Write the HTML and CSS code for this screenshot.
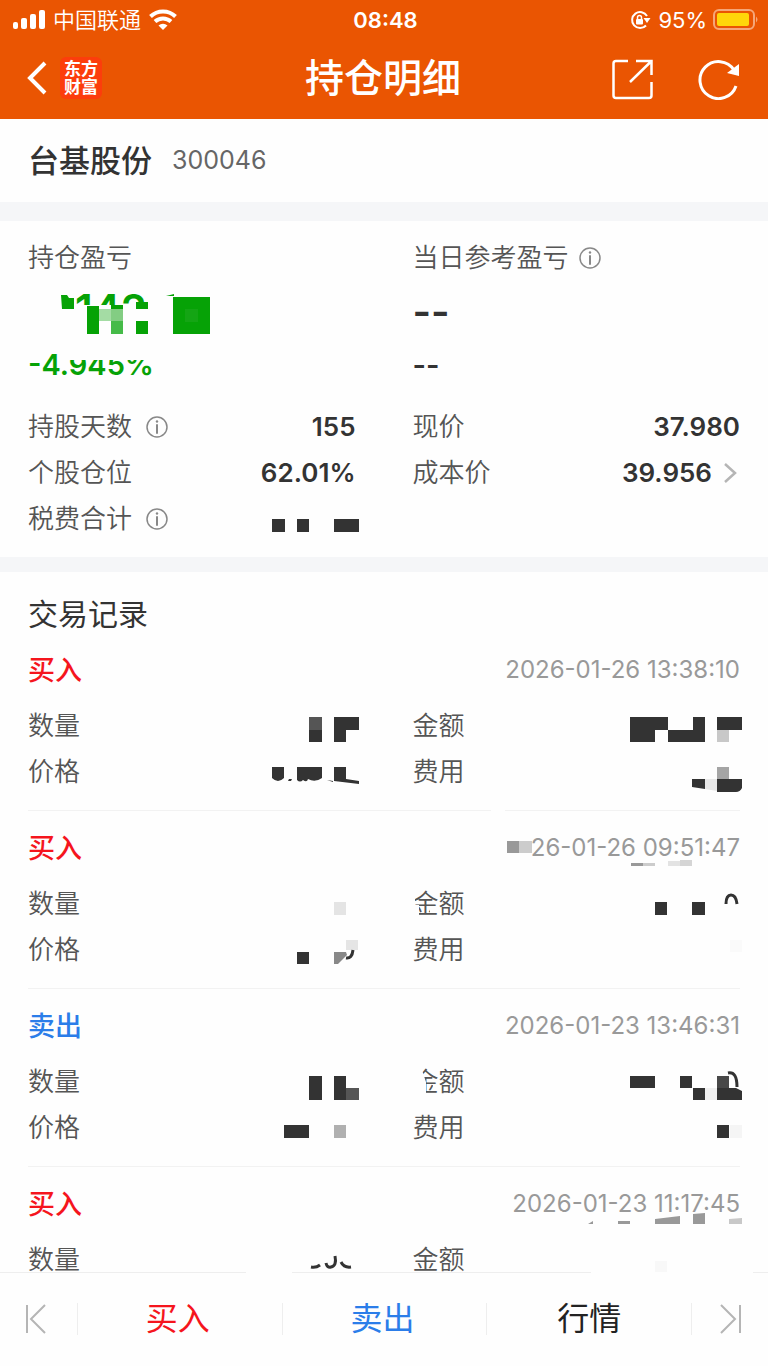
FILE: index.html
```html
<!DOCTYPE html>
<html lang="zh-CN">
<head>
<meta charset="utf-8">
<meta name="viewport" content="width=device-width, initial-scale=1">
<title>持仓明细</title>
<link rel="stylesheet" href="styles.css">
</head>
<body>
<div class="app">
  <header class="header">
    <div class="status">
      <div class="status-side">
        <svg width="34" height="22" viewBox="0 0 34 22" fill="#fff"><rect x="1" y="13" width="5" height="7" rx="2"/><rect x="9" y="9" width="6" height="11" rx="2"/><rect x="18" y="5" width="6" height="15" rx="2"/><rect x="27" y="1" width="6" height="19" rx="2"/></svg>
        <span class="carrier">中国联通</span>
        <svg width="30" height="22" viewBox="0 0 30 22"><g fill="none" stroke="#fff" stroke-width="4"><path d="M2.500 7.500a18 18 0 0 1 25 0"/><path d="M7 12.500a12 12 0 0 1 16 0"/></g><path d="M10.500 16.500a7 7 0 0 1 9 0L15 21z" fill="#fff"/></svg>
      </div>
      <time class="clock">08:48</time>
      <div class="status-side status-right">
        <svg width="22" height="20" viewBox="0 0 22 20"><path d="M17 6A8 8 0 1 0 16 15.500" fill="none" stroke="#fff" stroke-width="2"/><path d="M13.500 8h7l-3.500 5z" fill="#fff"/><rect x="6" y="9" width="7" height="5.500" rx="1" fill="#fff"/><path d="M7.500 9V7.500a2 2 0 0 1 4 0V9" fill="none" stroke="#fff" stroke-width="1.500"/></svg>
        <span class="battery-text">95%</span>
        <svg width="46" height="22" viewBox="0 0 46 22"><rect x="1" y="1" width="40" height="19" rx="5" fill="none" stroke="#f5a679" stroke-width="2"/><rect x="4" y="4" width="32" height="13" rx="2" fill="#ffd60a"/><path d="M43 7.500q3 3 0 6z" fill="#f5a679"/></svg>
      </div>
    </div>
    <div class="nav">
      <div class="nav-left">
        <button class="icon-btn" aria-label="返回"><svg width="22" height="34" viewBox="0 0 22 34" fill="none" stroke="#fff" stroke-width="4"><path d="M19 2 4 17l15 15"/></svg></button>
        <div class="logo"><span>东方</span><span>财富</span></div>
      </div>
      <h1 class="title">持仓明细</h1>
      <div class="nav-right">
        <button class="icon-btn" aria-label="分享"><svg width="42" height="42" viewBox="0 0 42 42" fill="none" stroke="#fff" stroke-width="2.500"><path d="M17 3H5q-2.500 0-2.500 2.500v32Q2.500 40 5 40h33q2.500 0 2.500-2.500V24M25 3h15.500v14M40 3.500 19 24"/></svg></button>
        <button class="icon-btn" aria-label="刷新"><svg width="42" height="42" viewBox="0 0 42 42"><path d="M36 12A18.500 18.500 0 1 0 38 28" fill="none" stroke="#fff" stroke-width="3"/><path d="M41 6v12l-12-3z" fill="#fff"/></svg></button>
      </div>
    </div>
  </header>

  <main class="content">
    <section class="stock">
      <h2 class="stock-name">台基股份</h2>
      <span class="stock-code">300046</span>
    </section>

    <section class="summary">
      <div class="pair pair-profit">
        <div>
          <div class="row"><span class="label">持仓盈亏</span></div>
          <div class="profit-big">
            <svg class="mosaic" width="184" height="62" viewBox="28 281 184 62" fill="#06a206">
              <clipPath id="top"><rect x="60" y="290" width="90" height="15"/></clipPath>
              <text x="75" y="325" class="profit-digits" clip-path="url(#top)">142</text>
              <path d="M61 295h6l2 3h5v11H62zM87 306h12v28H87zM136 302h12v7h-12zM136 321h12v13h-12zM173 297h37v37h-37zM166 296l8-2v2z"/>
              <path d="M99 309h12v12H99z" fill="#a4dca4"/><path d="M111 305h12v5h-12z"/><path d="M111 309h12v25h-12z" fill="#45bb48"/><path d="M111 309h12v12h-12z" fill="#83cd83"/><path d="M185 309h13v13h-13z" fill="#14a514"/>
            </svg>
          </div>
          <div class="profit-rate"><span>-4.945%</span><i class="veil"></i></div>
        </div>
        <div>
          <div class="row"><span class="label">当日参考盈亏</span><svg class="info near" viewBox="0 0 22 22"><use href="#info"/></svg></div>
          <div class="profit-big">--</div>
          <div class="profit-rate dark">--</div>
        </div>
      </div>
      <div class="pair">
        <div class="row"><span class="label">持股天数</span><svg class="info" viewBox="0 0 22 22"><use href="#info"/></svg><strong class="value">155</strong></div>
        <div class="row"><span class="label">现价</span><strong class="value">37.980</strong></div>
        <div class="row"><span class="label">个股仓位</span><strong class="value">62.01%</strong></div>
        <div class="row"><span class="label">成本价</span><strong class="value">39.956</strong><svg class="chevron" width="16" height="20" viewBox="0 0 16 20" fill="none" stroke="#b5b5b5" stroke-width="2.500"><path d="M3 1l10 9-10 9"/></svg></div>
        <div class="row"><span class="label">税费合计</span><svg class="info" viewBox="0 0 22 22"><use href="#info"/></svg>
          <svg class="mosaic value" width="90" height="46" viewBox="266 496 90 46" fill="#333"><path d="M272 519h13v13h-13zM297 519h12v13h-12zM334 519h25v13h-25z"/></svg></div>
      </div>
    </section>

    <section class="records">
      <h2 class="records-title">交易记录</h2>

      <article class="record record-split">
        <div class="record-head"><h3 class="buy">买入</h3><time>2026-01-26 13:38:10</time></div>
        <div class="pair">
          <div class="row"><span class="label">数量</span><svg class="mosaic value" width="90" height="46" viewBox="266 703 90 46" fill="#333"><path d="M309 730h13v12h-13zM334 717h25v13h-13v12h-12z"/><path d="M309 717h13v13h-13z" fill="#555"/></svg></div>
          <div class="row"><span class="label">金额</span><svg class="mosaic value" width="116" height="46" viewBox="624 703 116 46" fill="#333"><path d="M630 717h38v13h-13v12h-25zM668 730h25v-13h12v25h-37zM717 717h25v13h-25z"/><path d="M717 730h12v12h-12z" fill="#c8c8c8"/></svg></div>
          <div class="row"><span class="label">价格</span><svg class="mosaic value" width="90" height="46" viewBox="266 749 90 46" fill="#333"><path d="M272 767h12v11q-6 6-12 0zM288 781l1-2h3l-1 2zM297 767h25v11q-7 5-14 1-1 4-5 1-3 3-6 0zM327 780l6 1v1zM334 767h12v12l13 2v3l-25-3z"/></svg></div>
          <div class="row"><span class="label">费用</span><svg class="mosaic value" width="116" height="46" viewBox="624 749 116 46" fill="#333"><path d="M692 779h13v10l-13-2zM717 779h25v9q-2 4-6 4h-19z"/><path d="M717 767h12v12h-12z" fill="#a5a5a5"/><path d="M705 779h12v12l-12-2z" fill="#e8e8e8"/></svg></div>
        </div>
      </article>

      <article class="record">
        <div class="record-head"><h3 class="buy">买入</h3><time>2026-01-26 09:51:47</time>
          <svg class="mosaic cover" width="240" height="46" viewBox="500 825 240 46"><path d="M498 832h32l2 8v20h-34z" fill="#fefefe"/><path d="M507 841h12v12h-12z" fill="#999"/><path d="M519 841h13v12h-13z" fill="#ccc"/><path d="M631 863h12v3h-12z" fill="#999"/><path d="M643 863h12v3h-12z" fill="#ccc"/><path d="M668 861h12v5h-12z" fill="#e3e3e3"/><path d="M680 860h12v6h-12z" fill="#d5d5d5"/></svg></div>
        <div class="pair">
          <div class="row"><span class="label">数量</span><svg class="mosaic value" width="90" height="46" viewBox="266 881 90 46"><path d="M334 902h12v13h-12z" fill="#e4e4e4"/></svg></div>
          <div class="row"><span class="label">金额<svg class="label-cover" width="26" height="46" viewBox="0 0 26 46" fill="#fefefe"><path d="M0 8h2v30H0zM2 24h4v14H2zM17 25h8v7h-8z"/></svg></span><svg class="mosaic value" width="116" height="46" viewBox="624 881 116 46" fill="#333"><path d="M655 902h12v13h-12zM692 902h13v13h-13z"/><path d="M726 904q0-9 5-9t6 9" fill="none" stroke="#333" stroke-width="3"/></svg></div>
          <div class="row"><span class="label">价格</span><svg class="mosaic value" width="90" height="46" viewBox="266 927 90 46" fill="#333"><path d="M297 952h12v12h-12z"/><path d="M334 952h12l1 3-9 9h-4z" fill="#888"/><path d="M346 940h12v10h-12z" fill="#e5e5e5"/><path d="M353 950q-1 9-7 8" fill="none" stroke="#333" stroke-width="3"/></svg></div>
          <div class="row"><span class="label">费用</span><svg class="mosaic value" width="116" height="46" viewBox="624 927 116 46"><path d="M730 940h12v12h-12z" fill="#fafafa"/></svg></div>
        </div>
      </article>

      <article class="record">
        <div class="record-head"><h3 class="sell">卖出</h3><time>2026-01-23 13:46:31</time></div>
        <div class="pair">
          <div class="row"><span class="label">数量</span><svg class="mosaic value" width="90" height="46" viewBox="266 1059 90 46" fill="#333"><path d="M309 1076h13v24h-13zM334 1076h12v24h-12z"/><path d="M346 1088h13v12h-13z" fill="#555"/></svg></div>
          <div class="row"><span class="label">金额<svg class="label-cover" width="26" height="46" viewBox="0 0 26 46" fill="#fefefe"><path d="M0 8h8l5 15v15H0zM20 26h5v6h-5z"/></svg></span><svg class="mosaic value" width="116" height="46" viewBox="624 1059 116 46" fill="#333"><path d="M630 1076h25v12h-25zM680 1076h12v12h13v12h-12v-12h-13zM717 1088h19l6 3v9h-25z"/><path d="M705 1088h12v12h-12z" fill="#f0f0f0"/><path d="M717 1076h12v12h-12z" fill="#484848"/><path d="M728 1073q9-2 9 14" fill="none" stroke="#333" stroke-width="3"/></svg></div>
          <div class="row"><span class="label">价格</span><svg class="mosaic value" width="90" height="46" viewBox="266 1105 90 46"><path d="M284 1125h25v13h-25z" fill="#333"/><path d="M334 1125h12v13h-12z" fill="#b0b0b0"/></svg></div>
          <div class="row"><span class="label">费用</span><svg class="mosaic value" width="116" height="46" viewBox="624 1105 116 46"><path d="M717 1125h12v13h-12z" fill="#333"/><path d="M730 1125h12v13h-12z" fill="#f5f5f5"/></svg></div>
        </div>
      </article>

      <article class="record">
        <div class="record-head"><h3 class="buy">买入</h3><time>2026-01-23 11:17:45</time>
          <svg class="mosaic cover" width="240" height="46" viewBox="500 1181 240 46" fill="#999"><path d="M588 1224l5-3v3zM618 1221h12v3h-12zM655 1219l25-3v8h-25zM693 1214l12-1v11h-12z"/><path d="M729 1219l13-1v6h-13z" fill="#c8c8c8"/></svg></div>
        <div class="pair">
          <div class="row"><span class="label">数量</span><svg class="mosaic value" width="90" height="46" viewBox="266 1237 90 46" fill="none" stroke="#333" stroke-width="3"><path d="M311 1267q5 1 9-2M326 1263q1 5 5 4 6-1 4-11M341 1262q3 6 10 5"/></svg></div>
          <div class="row"><span class="label">金额</span><svg class="mosaic value" width="116" height="46" viewBox="624 1237 116 46"><path d="M655 1261h12v12h-12z" fill="#f8f8f8"/></svg></div>
        </div>
      </article>
    </section>
  </main>

  <nav class="tabs">
    <button class="tab tab-edge" aria-label="上一个"><svg width="22" height="30" viewBox="0 0 22 30" fill="none" stroke="#b5b5b5" stroke-width="2"><path d="M2 1v28M20 1 6 15l14 14"/></svg></button>
    <button class="tab tab-buy">买入</button>
    <button class="tab tab-sell">卖出</button>
    <button class="tab">行情</button>
    <button class="tab tab-edge" aria-label="下一个"><svg width="22" height="30" viewBox="0 0 22 30" fill="none" stroke="#b5b5b5" stroke-width="2"><path d="M20 1v28M1 1l14 14L1 29"/></svg></button>
  </nav>
</div>
<svg class="defs" aria-hidden="true"><symbol id="info" viewBox="0 0 22 22"><circle cx="11" cy="11" r="10" fill="none" stroke="#888" stroke-width="1.500"/><circle cx="11" cy="5.500" r="1.200" fill="#888"/><path d="M11 9v8" stroke="#888" stroke-width="2" stroke-linecap="round"/></symbol></svg>
</body>
</html>
```
FILE: styles.css
```css
* { box-sizing: border-box; margin: 0; }

body {
  font-family: Inter, "Noto Sans CJK SC", sans-serif;
  font-size: 26px;
  line-height: 1;
  color: #333;
  background: #fefefe;
}

button {
  font: inherit;
  color: inherit;
  background: none;
  border: 0;
  padding: 0;
}

svg { display: block; flex: none; }

.defs { position: absolute; width: 0; height: 0; }

.app { display: flex; flex-direction: column; height: 100vh; }

.header { flex: none; background: #ea5502; color: #fff; }

.status,
.nav {
  display: grid;
  grid-template-columns: 1fr auto 1fr;
  align-items: center;
}

.status { height: 40px; padding: 0 9px 0 12px; }
.status-side { display: flex; align-items: center; gap: 7px; }
.status-right { justify-content: flex-end; gap: 6px; }
.carrier { font-size: 22px; font-weight: 350; line-height: 40px; }
.clock { font-size: 22px; font-weight: 600; }
.battery-text { font-size: 22px; }

.nav { height: 79px; padding: 0 28px 4px 26px; }
.nav-left { display: flex; align-items: center; gap: 12px; }
.nav-right { display: flex; justify-content: flex-end; gap: 45px; padding-top: 2px; }
.title { font-size: 39px; font-weight: 500; line-height: 56px; }

.logo {
  display: flex;
  flex-direction: column;
  align-items: center;
  justify-content: center;
  width: 42px;
  height: 42px;
  border-radius: 6px;
  background: #fc3d0c;
  font-size: 17px;
  font-weight: 700;
  line-height: 18px;
}

.content { flex: 1; min-height: 0; overflow: hidden; }

.stock {
  display: flex;
  align-items: center;
  gap: 20px;
  height: 83px;
  padding: 0 28px;
}
.stock-name { font-size: 31px; font-weight: 500; }
.stock-code { font-size: 25px; color: #666; }

.summary {
  padding: 14px 28px 15px;
  border-top: 19px solid #f5f6f8;
  border-bottom: 15px solid #f5f6f8;
}

.pair { display: grid; grid-template-columns: 1fr 1fr; column-gap: 57px; }
.pair-profit { margin-bottom: 17px; }

.row { display: flex; align-items: center; height: 46px; }
.label { position: relative; font-weight: 350; line-height: 24px; color: #555; }
.value { margin-left: auto; font-weight: 600; }
.info { width: 22px; height: 22px; margin-left: 14px; }
.near { margin-left: 10px; }
.chevron { margin-left: 10px; margin-right: 2px; }
.mosaic { overflow: visible; }

.profit-big { height: 62px; line-height: 62px; font-size: 40px; font-weight: 600; }
.profit-digits { font-size: 42px; font-weight: 600; }
.profit-rate {
  position: relative;
  height: 44px;
  line-height: 44px;
  font-size: 29px;
  font-weight: 600;
  color: #06a206;
}
.dark { color: #333; }
.veil {
  position: absolute;
  left: 40px;
  top: 8px;
  width: 88px;
  height: 9px;
  background: #fefefe;
}

.records { padding: 24px 28px 0; }
.records-title { font-size: 30px; font-weight: 400; line-height: 37px; }

.record { padding: 14px 0 15px; border-bottom: 1px solid #f2f2f2; }
.record-split {
  border-image: linear-gradient(90deg, #f2f2f2 65%, transparent 65%, transparent 67%, #f2f2f2 67%) 1;
}
.record-head {
  position: relative;
  display: flex;
  align-items: center;
  justify-content: space-between;
  height: 46px;
  margin-bottom: 10px;
}
.record-head h3 { font-size: 27px; font-weight: 500; }
.record-head time { font-size: 24px; color: #999; }
.buy { color: #f5151d; }
.sell { color: #2b7de9; }
.cover { position: absolute; right: 0; top: 0; }
.label-cover { position: absolute; left: 0; top: -11px; }

.tabs {
  flex: none;
  display: grid;
  grid-template-columns: 77px 1fr 1fr 1fr 77px;
  align-items: center;
  height: 94px;
  background: linear-gradient(90deg, #eee 32%, transparent 32%, transparent 38%, #eee 38%, #eee 77%, transparent 77%, transparent 98%, #eee 98%) top / 100% 1px no-repeat #fefefe;
}
.tab {
  display: flex;
  align-items: center;
  justify-content: center;
  height: 32px;
  font-size: 32px;
  color: #222;
}
.tab + .tab { border-left: 1px solid #eee; }
.tab-edge:first-child { padding-right: 6px; }
.tab-edge:last-child { padding-left: 2px; }
.tab-buy,
.tab-sell { padding-right: 4px; }
.tab-buy { color: #f5151d; }
.tab-sell { color: #2b7de9; }
```
